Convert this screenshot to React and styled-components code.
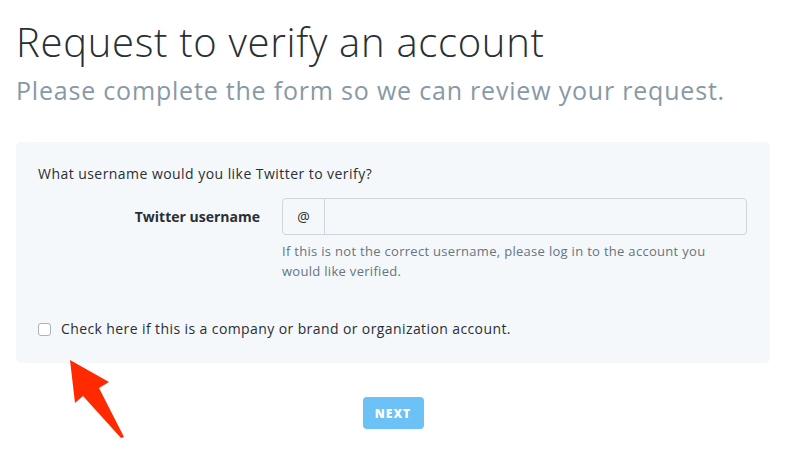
import React from "react";
import styled, { createGlobalStyle } from "styled-components";

const Global = createGlobalStyle`
  html, body { margin: 0; padding: 0; background: #fff; }
  body { font-family: "Open Sans", sans-serif; color: #292f33; }
`;

const Page = styled.div`
  position: relative;
  width: 800px;
  height: 456px;
  padding: 0 0 0 16px;
  box-sizing: border-box;
`;

const Header = styled.header`
  padding-top: 18px;
  margin-bottom: 36px;
`;

const Title = styled.h1`
  margin: 0;
  font-family: "Open Sans", sans-serif;
  font-weight: 300;
  font-size: 40px;
  line-height: 48px;
  letter-spacing: 0.7px;
  color: #292f33;
`;

const Subtitle = styled.p`
  margin: 8px 0 0;
  font-family: "Open Sans", sans-serif;
  font-weight: 400;
  font-size: 25px;
  line-height: 32px;
  letter-spacing: 0.8px;
  color: #8899a6;
`;

const Panel = styled.section`
  width: 754px;
  box-sizing: border-box;
  background: #f5f8fa;
  border-radius: 5px;
  padding: 22px 22px 24px;
`;

const Question = styled.p`
  margin: 0 0 14px;
  font-size: 14px;
  line-height: 20px;
  letter-spacing: 0.45px;
`;

const FieldRow = styled.div`
  display: grid;
  grid-template-columns: 222px 465px;
  column-gap: 22px;
  align-items: start;
`;

const Label = styled.label`
  font-weight: 700;
  font-size: 14px;
  line-height: 37px;
  text-align: right;
`;

const InputGroup = styled.div`
  display: flex;
  height: 37px;
  border: 1px solid #ccd6dd;
  border-radius: 4px;
  box-sizing: border-box;
  background: #f5f8fa;
  overflow: hidden;
`;

const Addon = styled.span`
  width: 41px;
  display: flex;
  align-items: center;
  justify-content: center;
  border-right: 1px solid #ccd6dd;
  font-size: 14px;
  color: #292f33;
`;

const Input = styled.input`
  flex: 1;
  border: 0;
  background: transparent;
  outline: none;
`;

const Help = styled.p`
  margin: 6px 0 0;
  font-size: 13px;
  line-height: 20px;
  letter-spacing: 0.3px;
  color: #66757f;
  max-width: 440px;
`;

const CheckRow = styled.label`
  display: flex;
  align-items: center;
  gap: 10px;
  margin-top: 38px;
  font-size: 14px;
  line-height: 20px;
  letter-spacing: 0.4px;
`;

const Box = styled.span`
  width: 11px;
  height: 11px;
  border: 1px solid #a8b2b8;
  border-radius: 3px;
  background: #fff;
`;

const Actions = styled.div`
  width: 754px;
  display: flex;
  justify-content: center;
  margin-top: 34px;
`;

const NextButton = styled.button`
  width: 61px;
  height: 32px;
  border: 0;
  border-radius: 4px;
  background: #6cc1f6;
  color: #fff;
  font-family: "Open Sans", sans-serif;
  font-weight: 800;
  font-size: 12px;
  letter-spacing: 1px;
  padding: 0;
`;

const Arrow = styled.svg`
  position: absolute;
  left: 60px;
  top: 352px;
`;

export default function App() {
  return (
    <Page>
      <Global />
      <Header>
        <Title>Request to verify an account</Title>
        <Subtitle>Please complete the form so we can review your request.</Subtitle>
      </Header>
      <Panel>
        <Question>What username would you like Twitter to verify?</Question>
        <FieldRow>
          <Label>Twitter username</Label>
          <div>
            <InputGroup>
              <Addon>@</Addon>
              <Input />
            </InputGroup>
            <Help>
              If this is not the correct username, please log in to the account you would like verified.
            </Help>
          </div>
        </FieldRow>
        <CheckRow>
          <Box />
          Check here if this is a company or brand or organization account.
        </CheckRow>
      </Panel>
      <Actions>
        <NextButton>NEXT</NextButton>
      </Actions>
      <Arrow width="70" height="95" viewBox="60 352 70 95">
        <polygon
          points="70,360 109,382 99,388 124,437 121,438 83,396 75,403"
          fill="#ff2a00"
        />
      </Arrow>
    </Page>
  );
}
